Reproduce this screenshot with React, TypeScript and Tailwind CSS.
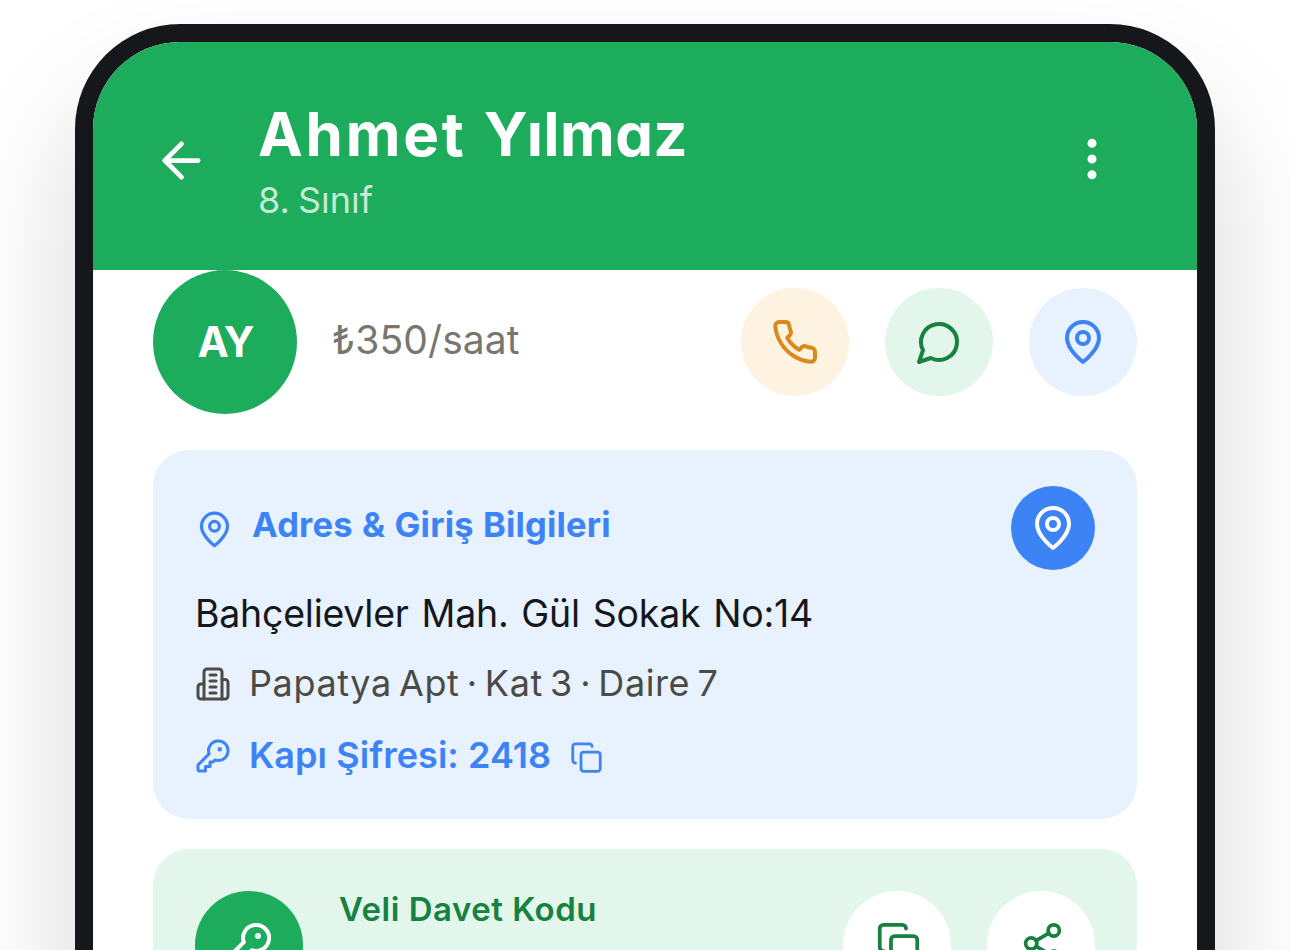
import type { ReactNode } from 'react'

type IconProps = { className: string; stroke?: number; children: ReactNode }

function Icon({ className, stroke = 2, children }: IconProps) {
  return (
    <svg
      viewBox="0 0 24 24"
      fill="none"
      stroke="currentColor"
      strokeWidth={stroke}
      strokeLinecap="round"
      strokeLinejoin="round"
      className={`shrink-0 ${className}`}
    >
      {children}
    </svg>
  )
}

function PinIcon({ className }: { className: string }) {
  return (
    <Icon className={className}>
      <path d="M20 10c0 6-8 12-8 12s-8-6-8-12a8 8 0 0 1 16 0Z" />
      <circle cx="12" cy="10" r="3" />
    </Icon>
  )
}

function KeyIcon({ className }: { className: string }) {
  return (
    <Icon className={className}>
      <path d="M2 18v3c0 .6.4 1 1 1h4v-3h3v-3h2l1.4-1.4a6.5 6.5 0 1 0-4-4Z" />
      <circle cx="16.5" cy="7.5" r=".5" fill="currentColor" />
    </Icon>
  )
}

function CopyIcon({ className }: { className: string }) {
  return (
    <Icon className={className}>
      <rect width="14" height="14" x="8" y="8" rx="2" />
      <path d="M4 16c-1.1 0-2-.9-2-2V4c0-1.1.9-2 2-2h10c1.1 0 2 .9 2 2" />
    </Icon>
  )
}

function Header() {
  return (
    <header className="flex h-[228px] items-center bg-[#1dab5c] pl-[60px] pr-[78px] text-white">
      <button className="mt-[9px]">
        <Icon className="size-[57px]">
          <path d="m12 19-7-7 7-7" />
          <path d="M19 12H5" />
        </Icon>
      </button>
      <div className="mt-1 ml-12 flex-1">
        <h1 className="h-[84px] text-[60px] leading-[84px] font-bold [font-feature-settings:'cv11']">
          <span className="tracking-[2.8px]">Ahmet </span>
          <span className="tracking-[0.4px]">Yılmaz</span>
        </h1>
        <p className="h-[48px] text-[36px] leading-[48px] [word-spacing:-2px] text-white/75">8. Sınıf</p>
      </div>
      <button className="mt-[6px]">
        <Icon className="size-[54px]">
          <circle cx="12" cy="12" r="1" />
          <circle cx="12" cy="5" r="1" />
          <circle cx="12" cy="19" r="1" />
        </Icon>
      </button>
    </header>
  )
}

function ProfileRow() {
  return (
    <section className="flex h-[144px] items-center">
      <div className="flex size-[144px] items-center justify-center rounded-full bg-[#1dab5c] pb-[2px] text-[42px] font-bold tracking-[-2px] text-white">
        AY
      </div>
      <span className="-mt-1 ml-[35px] flex-1 text-[39px] leading-[54px] tracking-[0.1px] text-[#78776f]">₺350/saat</span>
      <div className="flex gap-9">
        <button className="flex size-[108px] items-center justify-center rounded-full bg-[#fef2e0] text-[#d98a1c]">
          <Icon className="size-12">
            <path d="M22 16.92v3a2 2 0 0 1-2.18 2 19.79 19.79 0 0 1-8.63-3.07 19.5 19.5 0 0 1-6-6 19.79 19.79 0 0 1-3.07-8.67A2 2 0 0 1 4.11 2h3a2 2 0 0 1 2 1.72 12.84 12.84 0 0 0 .7 2.81 2 2 0 0 1-.45 2.11L8.09 9.91a16 16 0 0 0 6 6l1.27-1.27a2 2 0 0 1 2.11-.45 12.84 12.84 0 0 0 2.81.7A2 2 0 0 1 22 16.92z" />
          </Icon>
        </button>
        <button className="flex size-[108px] items-center justify-center rounded-full bg-[#e3f6eb] text-[#17813f]">
          <Icon className="size-12">
            <path d="M7.9 20A9 9 0 1 0 4 16.1L2 22Z" />
          </Icon>
        </button>
        <button className="flex size-[108px] items-center justify-center rounded-full bg-[#e8f1fe] text-[#3c83f6]">
          <PinIcon className="size-12" />
        </button>
      </div>
    </section>
  )
}

function AddressCard() {
  return (
    <section className="mt-9 h-[369px] rounded-[36px] bg-[#e8f1fe] px-[42px] pt-9 text-[#3c83f6]">
      <div className="flex h-[84px] items-center">
        <PinIcon className="mt-[3px] size-[39px]" />
        <h2 className="-mt-[6px] ml-[18px] flex-1 text-[34.5px] leading-[48px] font-bold tracking-[0.2px] [word-spacing:0.8px]">
          Adres &amp; Giriş Bilgileri
        </h2>
        <button className="flex size-[84px] items-center justify-center rounded-full bg-[#3c83f6] text-white">
          <PinIcon className="size-12" />
        </button>
      </div>
      <p className="mt-3 h-[63px] text-[37.5px] leading-[63px] tracking-[-0.25px] [word-spacing:2.6px] text-[#16171b]">
        Bahçelievler Mah. Gül Sokak No:14
      </p>
      <div className="mt-3 flex h-[54px] items-center gap-[18px] text-[#4b4a45]">
        <Icon className="size-9">
          <path d="M6 22V4a2 2 0 0 1 2-2h8a2 2 0 0 1 2 2v18Z" />
          <path d="M6 12H4a2 2 0 0 0-2 2v6a2 2 0 0 0 2 2h2" />
          <path d="M18 9h2a2 2 0 0 1 2 2v9a2 2 0 0 1-2 2h-2" />
          <path d="M10 6h4M10 10h4M10 14h4M10 18h4" />
        </Icon>
        <span className="-mt-[2px] text-[36px] leading-[54px] tracking-[0.6px] [word-spacing:-3.5px]">
          Papatya Apt · Kat 3 · Daire 7
        </span>
      </div>
      <div className="mt-[18px] flex h-[54px] items-center gap-[18px]">
        <KeyIcon className="size-9" />
        <span className="-mt-[2px] text-[36px] leading-[54px] font-semibold tracking-[0.05px]">Kapı Şifresi: 2418</span>
        <CopyIcon className="mt-[3px] ml-px size-[33px]" />
      </div>
    </section>
  )
}

function InviteCard() {
  return (
    <section className="mt-[30px] flex h-[192px] items-start rounded-[36px] bg-[#e3f6eb] p-[42px] text-[#17813f]">
      <div className="flex size-[108px] items-center justify-center rounded-full bg-[#1dab5c] text-white">
        <KeyIcon className="size-12" />
      </div>
      <h2 className="-mt-[6px] ml-9 flex-1 text-[33px] leading-[48px] font-semibold tracking-[0.5px]">Veli Davet Kodu</h2>
      <div className="flex gap-9">
        <button className="flex size-[108px] items-center justify-center rounded-full bg-white">
          <CopyIcon className="mb-[3px] ml-[3px] size-[45px]" />
        </button>
        <button className="flex size-[108px] items-center justify-center rounded-full bg-white">
          <Icon className="mb-[3px] ml-[3px] size-[45px]">
            <circle cx="18" cy="5" r="3" />
            <circle cx="6" cy="12" r="3" />
            <circle cx="18" cy="19" r="3" />
            <path d="m8.59 13.51 6.83 3.98M15.41 6.51l-6.82 3.98" />
          </Icon>
        </button>
      </div>
    </section>
  )
}

export default function App() {
  return (
    <div className="h-[950px] overflow-hidden bg-white pt-6 font-['Inter',sans-serif]">
      <div className="mx-auto h-[1400px] w-[1140px] rounded-[105px] bg-[#16171b] p-[18px] shadow-[0_72px_120px_rgba(0,0,0,0.16)]">
        <div className="h-full overflow-hidden rounded-[87px] bg-white">
          <Header />
          <main className="px-[60px]">
            <ProfileRow />
            <AddressCard />
            <InviteCard />
          </main>
        </div>
      </div>
    </div>
  )
}
